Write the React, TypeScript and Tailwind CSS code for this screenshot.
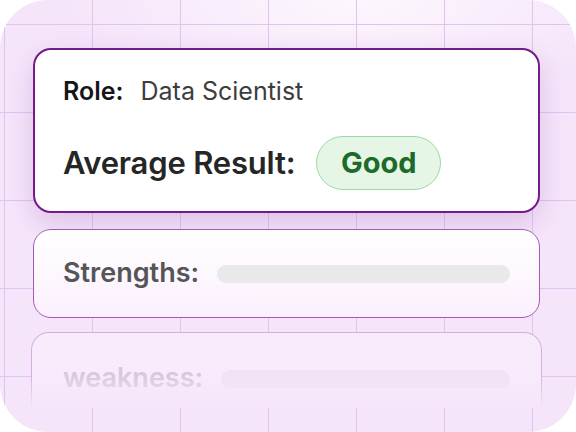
import React from 'react';

const font = { fontFamily: 'Inter, "Noto Sans", sans-serif' };

function GridLines() {
  // decorative grid behind the cards
  const xs = [4, 92, 180, 268, 356, 444, 532];
  const ys = [24, 112, 200, 288, 376];
  return (
    <svg className="absolute inset-0 pointer-events-none" width="576" height="432">
      <defs>
        <radialGradient id="glow" cx="0.62" cy="0" r="0.5">
          <stop offset="0" stopColor="#ffffff" stopOpacity="0.7" />
          <stop offset="1" stopColor="#ffffff" stopOpacity="0" />
        </radialGradient>
      </defs>
      <rect x="0" y="0" width="576" height="200" fill="url(#glow)" />
      {xs.map((x) => (
        <line key={'x' + x} x1={x + 0.5} y1="0" x2={x + 0.5} y2="432" stroke="#e3c2ee" strokeWidth="1" />
      ))}
      {ys.map((y) => (
        <line key={'y' + y} x1="0" y1={y + 0.5} x2="576" y2={y + 0.5} stroke="#e3c2ee" strokeWidth="1" />
      ))}
    </svg>
  );
}

export default function App() {
  return (
    <div className="w-[576px] h-[432px] bg-white" style={font}>
      <div className="relative w-full h-full rounded-[48px] overflow-hidden bg-[#f5e5fa]">
        <GridLines />

        <div className="relative flex flex-col pt-[48px] pl-[33px] pr-[36px]">
          {/* main result card */}
          <div className="h-[165px] rounded-[18px] border-[2.5px] border-[#731b89] bg-white px-[28px] pt-[26px] shadow-[0_10px_28px_rgba(130,50,160,0.2)]">
            <div className="flex items-baseline gap-[17px] leading-[30px]">
              <span className="text-[25px] font-semibold text-[#161616]">Role:</span>
              <span className="text-[25px] text-[#3d3d3d]">Data Scientist</span>
            </div>
            <div className="flex items-center gap-[21px] mt-[30px]">
              <span className="text-[31px] font-semibold text-[#262626] tracking-[-0.2px]">Average Result:</span>
              <span className="h-[54px] w-[125px] flex items-center justify-center rounded-full border-[1.5px] border-[#9cd9a3] bg-[#e6f6e6] text-[29px] font-bold text-[#1c6b29]">
                Good
              </span>
            </div>
          </div>

          {/* strengths */}
          <div className="mt-[16px] h-[89px] rounded-[18px] border border-[#a35bb4] bg-gradient-to-b from-white to-[#fbf0fd] px-[29px] flex items-center gap-[18px]">
            <span className="text-[27px] font-semibold text-[#555557]">Strengths:</span>
            <div className="flex-1 h-[18px] rounded-full bg-[#e9e8eb]" />
          </div>

          {/* weakness, fading out */}
          <div className="relative mt-[14px] -mx-[2px] h-[76px] rounded-t-[18px] border border-b-0 border-[#d5aee0] bg-[#f8ebfc] px-[31px] pt-[29px] flex items-start gap-[18px]">
            <span className="text-[27px] font-semibold leading-[32px] text-[#d9c8dd]">weakness:</span>
            <div className="flex-1 mt-[8px] h-[18px] rounded-full bg-[#f1e3f5]" />
            <div className="absolute -left-[2px] -right-[2px] bottom-0 h-[34px] bg-gradient-to-b from-transparent to-[#f5e5fa]" />
          </div>
        </div>
      </div>
    </div>
  );
}
